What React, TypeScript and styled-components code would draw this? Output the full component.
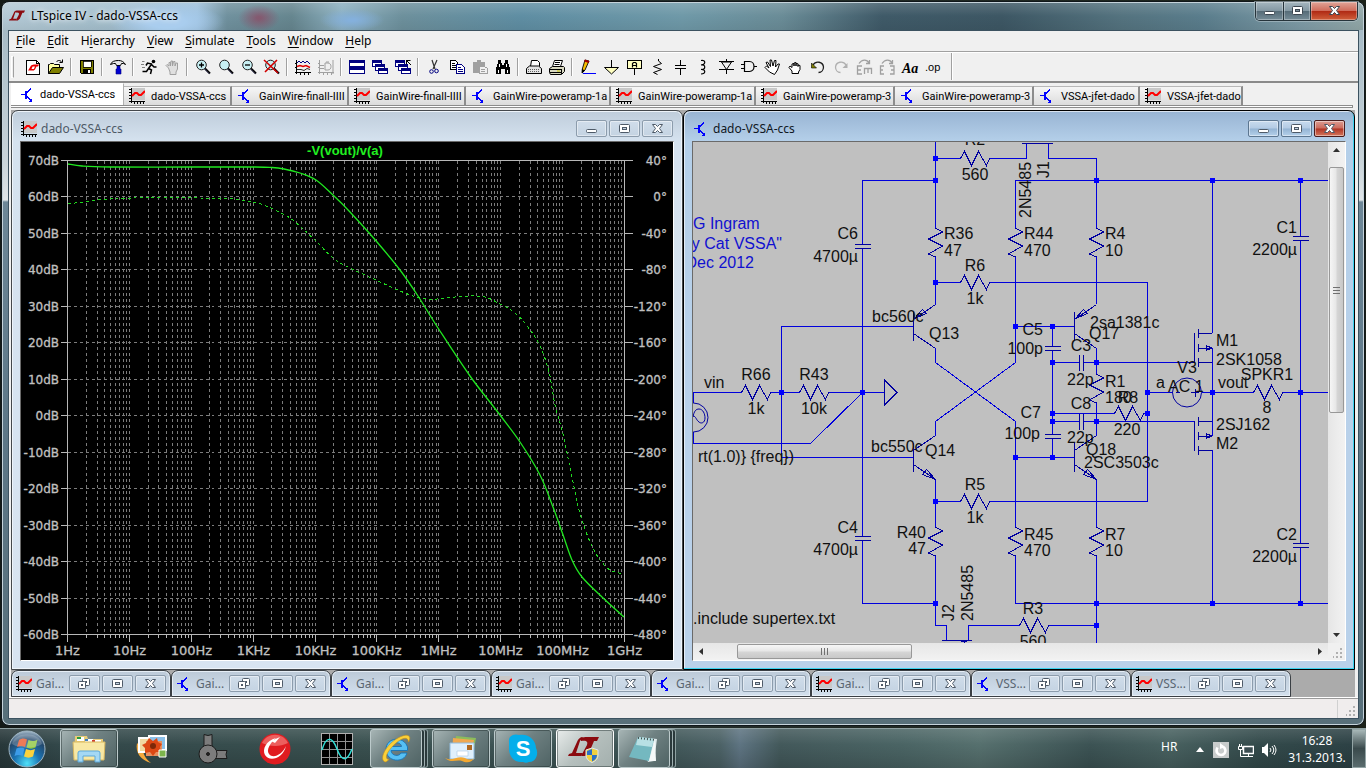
import React from "react";
import styled, { createGlobalStyle, css } from "styled-components";

const ui = `"Noto Sans", "Open Sans", sans-serif`;
const arial = `"Liberation Sans", Arial, sans-serif`;

const GlobalStyle = createGlobalStyle`
  * { box-sizing: border-box; }
  body { margin: 0; background: #1d2622; font-family: ${ui}; font-size: 12px; color: #000; }
  button { font: inherit; color: inherit; border: 0; background: none; padding: 0; margin: 0; }
  svg { display: block; flex: none; }
`;

/* ---------- shell ---------- */

const Desktop = styled.div`
  min-height: 100vh;
  display: flex;
  flex-direction: column;
  padding-top: 1px;
  background: linear-gradient(90deg, #141a17, #232d2a 50%, #1b2119);
`;

const AppWindow = styled.main`
  flex: 1;
  display: flex;
  flex-direction: column;
  margin: 0 1px 2px 1px;
  padding: 0 5px 6px 6px;
  border: 1px solid #10171b;
  border-radius: 8px;
  box-shadow: inset 0 0 0 1px #c5d3da;
  background:
    radial-gradient(ellipse 22px 14px at 257px 16px, #8c4a64c0 10%, transparent 95%) 0 0 / 100% 28px no-repeat,
    radial-gradient(ellipse 34px 12px at 350px 18px, #84b0dc 10%, transparent 95%) 0 0 / 100% 28px no-repeat,
    radial-gradient(ellipse 60px 20px at 165px 20px, #a9cdee 30%, transparent 95%) 0 0 / 100% 28px no-repeat,
    linear-gradient(#ffffff28, transparent 14px, #00000010) 0 0 / 100% 28px no-repeat,
    linear-gradient(90deg, #b4cad6 0, #a5c0ce 100px, #9dc0dc 195px, #70919e 225px, #66868f 290px, #8cb0c0 340px, #6d909c 400px, #5f8ea3 520px, #6f99a8 680px, #6a8c97 780px, #3f5a68 880px, #3d5764 1000px, #54737f 1120px, #5a7d8c 1200px, #7e9ba6 1300px, #93a8a8 100%) 0 0 / 100% 28px no-repeat,
    linear-gradient(180deg, #9fb6c2, #c9d4d9 160px, #dfe5e8 198px, #6d8797 200px, #5d7787 60%, #58707a);
`;

const TitleBar = styled.header`
  height: 28px;
  display: flex;
  align-items: flex-start;
  padding-right: 1px;
`;

const AppTitle = styled.h1`
  flex: 1;
  display: flex;
  align-items: center;
  gap: 6px;
  margin: 0;
  padding: 0 0 0 1px;
  height: 27px;
  font-size: 12px;
  font-weight: 400;
  text-shadow: 0 0 5px #fff, 0 0 8px #ffffffb0;
`;

const CaptionGroup = styled.div`
  display: flex;
  height: 19px;
  border: 1px solid #26343b;
  border-top: 0;
  border-radius: 0 0 5px 5px;
  overflow: hidden;
  box-shadow: 0 0 0 1px #b4c4cb90;
`;

const AppCaption = styled.button<{ $close?: boolean }>`
  width: ${(p) => (p.$close ? 47 : 27)}px;
  display: grid;
  place-items: center;
  background: ${(p) =>
    p.$close
      ? "linear-gradient(#e0a498 0, #cf6d5c 48%, #b02a14 52%, #d0603c)"
      : "linear-gradient(#a5b6bf 0, #8498a3 48%, #566c78 52%, #768c97)"};
  box-shadow: inset 0 0 0 1px #ffffff50;
  & + & { border-left: 1px solid #26343b; }
`;

const Client = styled.div`
  flex: 1;
  display: flex;
  flex-direction: column;
  border: 1px solid #3c5260;
  background: #f0f0f0;
`;

const MenuBar = styled.nav`
  display: flex;
  height: 21px;
  align-items: center;
  padding-left: 1px;
  border-bottom: 1px solid #a0a0a0;
`;

const MenuItem = styled.button`
  padding: 0 6px;
  line-height: 18px;
  u { text-underline-offset: 2px; }
`;

const ToolBar = styled.div`
  display: flex;
  align-items: center;
  height: 31px;
  padding: 0 0 1px 2px;
  border-top: 1px solid #fff;
  border-bottom: 2px solid #8a8a8a;
`;

const Grip = styled.span`
  width: 3px;
  height: 22px;
  margin-right: 7px;
  border: 1px solid #fff;
  border-right-color: #a0a0a0;
`;

const Tool = styled.button<{ $off?: boolean }>`
  width: 23px;
  height: 22px;
  padding-left: 4px;
  display: flex;
  align-items: center;
  color: ${(p) => (p.$off ? "#a0a0a0" : "#000")};
`;

const Divider = styled.span`
  width: 8px;
  height: 18px;
  background: linear-gradient(90deg, transparent 3px, #a0a0a0 3px, #a0a0a0 4px, #fff 4px, #fff 5px, transparent 5px);
`;

const ToolEnd = styled.span`
  width: 8px;
  align-self: stretch;
  border-right: 1px solid #a0a0a0;
  box-shadow: 1px 0 0 #fff;
`;

const TabStrip = styled.div`
  display: flex;
  align-items: flex-end;
  height: 22px;
  padding-left: 2px;
`;

const Tab = styled.button<{ $w: number; $active?: boolean }>`
  flex: 0 1 ${(p) => p.$w}px;
  width: ${(p) => p.$w}px;
  height: ${(p) => (p.$active ? 22 : 19)}px;
  display: flex;
  align-items: center;
  gap: ${(p) => (p.$active ? 4 : 6)}px;
  padding: 0 0 0 ${(p) => (p.$active ? 9 : 5)}px;
  overflow: hidden;
  white-space: nowrap;
  font-family: Roboto, ${arial};
  font-size: 11px;
  border-right: 2px solid #8c8c8c;
  border-top: 1px solid #b8b8b8;
  background: ${(p) => (p.$active ? "#fff" : "linear-gradient(#f6f6f6, #dcdcdc)")};
  ${(p) => p.$active && css`border-color: #fff #b0b0b0 #fff #fff; border-right-width: 1px;`}
`;

const TabRule = styled.div`
  height: 3px;
  margin: 0 5px 2px 2px;
  border: 1px solid #8c8c8c;
  border-left: 0;
  background: #fff;
`;

const Mdi = styled.section`
  flex: 1;
  display: flex;
  flex-direction: column;
  margin: 0 3px 0 2px;
  background: #ababab;
`;

const Tiles = styled.div`
  flex: 1;
  display: flex;
`;

const frame = css`
  border: 1px solid #3a3f44;
  border-radius: 7px 7px 0 0;
`;

const Child = styled.article<{ $active?: boolean }>`
  ${frame}
  flex: 1 1 0;
  min-width: 0;
  display: flex;
  flex-direction: column;
  padding: 0 8px 8px;
  background: ${(p) =>
    p.$active
      ? "linear-gradient(#98b4d3, #b4cfe9 30px, #b9d1ea 60%, #b9d1ea)"
      : "linear-gradient(#bfcddb, #d5e2ef 30px, #d8e4f1)"};
  border-color: ${(p) => (p.$active ? "#000" : "#44484c")};
  box-shadow: ${(p) => (p.$active ? "inset -1px -1px 0 #3bd3f0, inset 1px 1px 0 #ffffffa0" : "inset 0 0 0 1px #eef4fa")};
`;

const ChildBar = styled.header<{ $active?: boolean }>`
  height: 30px;
  display: flex;
  gap: 2px;
  padding: 9px 1px 0 0;
  color: ${(p) => (p.$active ? "#10181f" : "#4e5a66")};
`;

const ChildTitle = styled.h2`
  flex: 1;
  display: flex;
  gap: 4px;
  align-items: center;
  margin: 0;
  padding-left: 1px;
  height: 17px;
  font-size: 12px;
  font-weight: 400;
`;

const Caption = styled.button<{ $tone?: "close" | "active" }>`
  width: 31px;
  height: 17px;
  display: grid;
  place-items: center;
  border: 1px solid #8c9cac;
  border-radius: 2px;
  background: ${(p) =>
    p.$tone === "close"
      ? "linear-gradient(#dc9c92 0, #cc6a5c 48%, #b03424 52%, #d4765c)"
      : p.$tone === "active"
        ? "linear-gradient(#c8dbee 0, #b3cbe4 48%, #94b4d4 52%, #b4d0ea)"
        : "linear-gradient(#d0ddea, #c4d3e2)"};
  border-color: ${(p) => (p.$tone === "close" ? "#4a1c1c" : p.$tone ? "#5c7690" : "#8c9cac")};
  box-shadow: inset 0 0 0 1px #ffffff70;
`;

const ChildBody = styled.div<{ $plot?: boolean }>`
  flex: 1;
  display: grid;
  grid-template: ${(p) => (p.$plot ? "minmax(0, 1fr) / minmax(0, 1fr)" : "minmax(0, 1fr) 17px / minmax(0, 1fr) 17px")};
  min-height: 520px;
  border: 1px solid #fff;
  border-top-color: #6a6a6a;
  border-left-color: #6a6a6a;
  background: ${(p) => (p.$plot ? "#000" : "#f0f0f0")};
  svg.canvas { width: 100%; height: 100%; }
`;

const VScroll = styled.div`
  display: flex;
  flex-direction: column;
  align-items: center;
  background: linear-gradient(90deg, #e6e6e6, #f2f2f2);
`;

const HScroll = styled.div`
  display: flex;
  align-items: center;
  background: linear-gradient(#e6e6e6, #f2f2f2);
`;

const Arrow = styled.button`
  width: 17px;
  height: 17px;
  display: grid;
  place-items: center;
`;

const VThumb = styled.div`
  width: 15px;
  height: 246px;
  margin-top: 8px;
  display: grid;
  place-items: center;
  border: 1px solid #989898;
  border-radius: 2px;
  background: linear-gradient(90deg, #f6f6f6, #e6e6e6 48%, #d6d6d6 52%, #c8c8c8);
`;

const HThumb = styled.div`
  width: 175px;
  height: 15px;
  margin-left: 27px;
  display: grid;
  place-items: center;
  border: 1px solid #989898;
  border-radius: 2px;
  background: linear-gradient(#f6f6f6, #e6e6e6 48%, #d6d6d6 52%, #c8c8c8);
`;

const Fill = styled.span`flex: 1;`;

const GripCell = styled.div`
  display: grid;
  place-items: end;
  padding: 2px;
`;

const MinRow = styled.div`
  display: flex;
  height: 27px;
`;

const MinChild = styled.div`
  ${frame}
  width: 160px;
  display: flex;
  align-items: center;
  gap: 2px;
  padding: 0 4px;
  color: #5a6672;
  background: linear-gradient(#bccad8, #d3e0ed);
  box-shadow: inset 0 0 0 1px #e6eef6;
  span { flex: 1; padding-left: 2px; }
`;

const StatusBar = styled.footer`
  height: 21px;
  display: flex;
  justify-content: flex-end;
  align-items: stretch;
  border-top: 1px solid #fff;
  box-shadow: inset 0 1px 0 #9a9a9a;
  background: #f0eded;
`;

const StatusGrip = styled.div`
  width: 21px;
  margin-top: 2px;
  padding: 2px;
  display: grid;
  place-items: end;
  border-left: 1px solid #d0d0d0;
`;

/* ---------- taskbar ---------- */

const TaskBar = styled.footer`
  height: 40px;
  display: flex;
  align-items: stretch;
  border-top: 1px solid #8ea0a2;
  color: #fff;
  background:
    linear-gradient(#ffffff20, transparent 40%, #00000028),
    linear-gradient(90deg, #28383a 0, #33484a 60px, #39504f 340px, #3f5657 660px, #4c6266 720px, #5e7482 740px, #43595b 780px, #4a6464 900px, #56706e 980px, #3c5354 1090px, #486160 1170px, #334a4b 1260px, #2c4044 100%);
`;

const StartButton = styled.button`
  width: 60px;
  padding-left: 8px;
  display: flex;
  align-items: center;
`;

const Task = styled.button<{ $state?: "open" | "stack" | "front" }>`
  width: 58px;
  margin-right: 4px;
  display: flex;
  align-items: center;
  justify-content: center;
  ${(p) =>
    p.$state &&
    css`
      border: 1px solid #bccacb;
      border-radius: 3px;
      box-shadow: inset 0 0 0 1px #1c282a70;
      background: linear-gradient(135deg, #a7b5b5 0, #6f8182 45%, #4f6364);
    `}
  ${(p) => p.$state === "front" && css`background: linear-gradient(135deg, #e8eceb 0, #b5bfbd 50%, #a3afad); border-color: #fff;`}
  ${(p) =>
    p.$state === "stack" &&
    css`
      width: 52px;
      margin-right: 10px;
      box-shadow: 3px 0 0 -1px #2a393b, 3px 0 0 0 #9fb0b1, 6px 0 0 -1px #2a393b, 6px 0 0 0 #8da0a1;
    `}
`;

const Tray = styled.div`
  margin-left: auto;
  display: flex;
  align-items: center;
`;

const Lang = styled.button`
  width: 35px;
  padding-bottom: 4px;
  text-align: left;
`;

const TrayIcon = styled.button<{ $w: number }>`
  width: ${(p) => p.$w}px;
  padding-top: 2px;
`;

const Clock = styled.time`
  width: 70px;
  text-align: center;
  line-height: 17px;
`;

const ShowDesktop = styled.button`
  align-self: stretch;
  width: 14px;
  border: 1px solid #94a5a6;
  background: linear-gradient(#a8b8b8, #3a4a4c 50%, #5a6c6e);
`;

/* ---------- small glyphs ---------- */

const TransistorIcon = () => (
  <svg width="16" height="16" shapeRendering="crispEdges" fill="none" stroke="#0000ff">
    <path d="M1 7.500h4M7 5.500l4-4M7 9.500l4 4" />
    <path d="M6 4v8" strokeWidth="2" />
    <path d="M12 15H8l4-4z" fill="#0000ff" stroke="none" />
  </svg>
);

const WaveIcon = () => (
  <svg width="16" height="16" shapeRendering="crispEdges">
    <path d="M2 0h14v12H2z" fill="#c8c8c8" />
    <path d="M2.500 0v15M0 13.500h16M0 1.500h2M0 4.500h2M0 7.500h2M0 10.500h2M5.500 13v3M8.500 13v3M11.500 13v3M14.500 13v3" stroke="#000" fill="none" />
    <path d="M3 8l3-3h2l2 2h2l4-4" stroke="#f00" strokeWidth="2" fill="none" shapeRendering="auto" />
  </svg>
);

const markL = "M0 19l1-2 3-1L9 5C10 2 12 0 15 0l-3 4-4 12h7l-2 3z";
const markT = "M13 1c2-1 4-1 6-1h12l-2 4h-3l-5 12-4 3h-4l6-11c1-3 0-5-6-4z";

const LogoMark = () => (
  <svg width="16" height="11" viewBox="0 0 31 19" fill="#8b0a0f">
    <path d={markL} />
    <path d={markT} />
  </svg>
);

const CapIcon = ({ kind, dark }: { kind: "min" | "max" | "close" | "restore"; dark?: boolean }) => {
  const s = dark ? "#3c4650" : "#4e5a68";
  return (
    <svg width="15" height="12" viewBox="0 0 15 12">
      {kind === "min" && <rect x="2.500" y="6.500" width="10" height="3" rx="1" fill="#fff" stroke={s} />}
      {kind === "max" && (
        <g stroke={s} fill="#fff">
          <rect x="2.500" y="1.500" width="10" height="8" rx="1" />
          <rect x="5.500" y="4.500" width="4" height="2" fill={dark ? "#7c8e99" : "#c4d3e2"} />
        </g>
      )}
      {kind === "restore" && (
        <g stroke={s} fill="#fff">
          <rect x="5.500" y="0.500" width="7" height="7" rx="1" />
          <rect x="8" y="3" width="2" height="2" stroke="none" fill={s} />
          <rect x="1.500" y="3.500" width="7" height="7" rx="1" />
          <rect x="4.500" y="6.500" width="1" height="1" />
        </g>
      )}
      {kind === "close" && (
        <path d="M2.500 1.500h3l2 2 2-2h3L9.500 5.500l3 4h-3l-2-2-2 2h-3l3-4z" fill="#fff" stroke={s} strokeLinejoin="round" />
      )}
    </svg>
  );
};

const GripDots = () => (
  <svg width="10" height="10" fill="#b0b0b0" shapeRendering="crispEdges">
    <path d="M7 0h2v2H7zM7 4h2v2H7zM3 4h2v2H3zM7 8h2v2H7zM3 8h2v2H3zM0 8h1v2H0z" />
  </svg>
);

/* ---------- toolbar icons ---------- */

const Lens = ({ children }: { children?: React.ReactNode }) => (
  <>
    <circle cx="6.500" cy="6" r="4.800" fill="#c8f0f4" stroke="#202020" />
    <path d="M10 9.500l5 5" stroke="#000" strokeWidth="2" />
    <path d="M9.500 10l5 5" stroke="#404060" />
    {children}
  </>
);

const cascade = (
  <g fill="#fff" stroke="#000080" shapeRendering="crispEdges">
    <rect x="0.500" y="1.500" width="9" height="6" />
    <path d="M0 2.500h10" strokeWidth="2" />
    <rect x="3.500" y="5.500" width="9" height="6" />
    <path d="M3 6.500h10" strokeWidth="2" />
    <rect x="6.500" y="9.500" width="9" height="5" />
    <path d="M6 10.500h10" strokeWidth="2" />
  </g>
);

const hand = "M4.500 9L2 6.500l1-1L5 7V3.500h1.500V7L7 2h1.500v5L9.500 2.500H11V7l1-3h1.500v6L12 13v2.500H6V13z";

type ToolDef = { id: string; off?: boolean; art: React.ReactNode } | "|";

const tools: ToolDef[] = [
  {
    id: "New schematic",
    art: (
      <>
        <path d="M1.500 1.500h10l3 3v11h-13z" fill="#fff" stroke="#000" shapeRendering="crispEdges" />
        <path d="M11.500 1.500v3h3" fill="none" stroke="#000" shapeRendering="crispEdges" />
        <path d="M3 11.500l1-1.500 2-3.500 2.500-1L6.500 10H9l-1 1.500zM8 6l1-.5h5l-1 2h-1.500L10 10.500l-2 1.500 2-4.500H7.500z" fill="#e80000" />
      </>
    ),
  },
  {
    id: "Open",
    art: (
      <>
        <path d="M.500 14.500V5.500h1l1-1h3l1 1h5v3" fill="#ffffa0" stroke="#000" />
        <path d="M.500 14.500l4-6h11l-4 6z" fill="#808000" stroke="#000" />
        <path d="M8.500 3c1-2 4-2 5 0M11.500 3.500h3v-3" fill="none" stroke="#000" />
      </>
    ),
  },
  "|",
  {
    id: "Save",
    art: (
      <g shapeRendering="crispEdges">
        <path d="M1.500 1.500h13v13h-12l-1-1z" fill="#808000" stroke="#000" />
        <path d="M4 2h8v6H4z" fill="#fff" stroke="#000" strokeWidth="0.800" />
        <path d="M4 10h8v5H4z" fill="#000" />
        <path d="M9 11h2v3H9z" fill="#fff" />
      </g>
    ),
  },
  "|",
  {
    id: "Control panel",
    art: (
      <>
        <path d="M.500 5.500c1-3 4-4 8-4 3 0 5 1 7 4l-2-1h-2l-1 2h-4l-1-2h-2z" fill="#e8e8e8" stroke="#000" />
        <path d="M7 7h3v3h1v5H6v-5h1z" fill="#0000d0" stroke="#000080" strokeWidth="0.600" />
      </>
    ),
  },
  "|",
  {
    id: "Run",
    art: (
      <>
        <circle cx="12.500" cy="2.500" r="1.800" fill="#000" />
        <path d="M11 4.500L7.500 9.500M10.500 5L6.500 4 5 6.500M11 6l2 2h2.500M7.500 9.500l3 1.500-1 4M7.500 9.500L5.500 12.500H1.500" fill="none" stroke="#000" strokeWidth="1.500" />
        <path d="M1 2.500h2.500M0 5.500h3M1 8.500h3" stroke="#808080" />
      </>
    ),
  },
  { id: "Halt", off: true, art: <path d={hand} fill="#e0e0e0" stroke="#a0a0a0" /> },
  "|",
  { id: "Zoom in", art: <Lens><path d="M4 6h5M6.500 3.500v5" stroke="#000" strokeWidth="1.300" /></Lens> },
  { id: "Pan", art: <Lens /> },
  { id: "Zoom back", art: <Lens><path d="M4 6h5" stroke="#000" strokeWidth="1.300" /></Lens> },
  { id: "Zoom full extents", art: <Lens><path d="M0 1l14 13M13 1L1 13" stroke="#d00000" strokeWidth="1.600" /></Lens> },
  "|",
  {
    id: "Autorange",
    art: (
      <>
        <path d="M1.500 1v14M0 13.500h16M0 4.500h2M0 8.500h2M5.500 13v3M9.500 13v3M13.500 13v3" stroke="#000" fill="none" shapeRendering="crispEdges" />
        <path d="M2 4l2-2 2 2 2-2 2 2 2-2 3 3" fill="none" stroke="#000080" />
        <path d="M2 7.500l3-1 3 1 3-1 4 2" fill="none" stroke="#e00000" strokeWidth="1.500" />
        <path d="M2 10.500h4l3 1 3-2 3 1" fill="none" stroke="#303030" />
      </>
    ),
  },
  {
    id: "Pick visible traces",
    off: true,
    art: (
      <g fill="none" stroke="#a0a0a0">
        <path d="M1.500 1v14M0 13.500h16M0 4.500h2M0 8.500h2M5.500 13v3M9.500 13v3M13.500 13v3M2 6.500h4M2 9.500h4M8 3h3M15 1v14" />
        <path d="M7 4v7h3c4 0 4-7 0-7z" />
      </g>
    ),
  },
  "|",
  {
    id: "Tile",
    art: (
      <g fill="#fff" stroke="#000080" shapeRendering="crispEdges">
        <rect x="0.500" y="1.500" width="15" height="6" />
        <path d="M0 2.500h16" strokeWidth="2" />
        <rect x="0.500" y="8.500" width="15" height="6" />
        <path d="M0 9.500h16" strokeWidth="2" />
      </g>
    ),
  },
  { id: "Cascade", art: cascade },
  {
    id: "Close all",
    art: (
      <>
        {cascade}
        <path d="M11.500 1.500h4M11.500 1v4M12 2l4 4" stroke="#000" fill="none" />
      </>
    ),
  },
  "|",
  {
    id: "Cut",
    art: (
      <>
        <path d="M6 1l3 9M11 1L7 10" stroke="#303030" strokeWidth="1.200" />
        <circle cx="5.500" cy="12.500" r="1.800" fill="none" stroke="#000080" />
        <circle cx="10.500" cy="12" r="1.800" fill="none" stroke="#000080" />
      </>
    ),
  },
  {
    id: "Copy",
    art: (
      <g fill="#fff" stroke="#000" shapeRendering="crispEdges">
        <path d="M1.500 1.500h5l2 2v7h-7zM3 4.500h3M3 6.500h4M3 8.500h4" />
        <path d="M7.500 5.500h5l3 3v6h-8zM9 8.500h3M9 10.500h5M9 12.500h5" stroke="#000080" />
      </g>
    ),
  },
  {
    id: "Paste",
    off: true,
    art: (
      <g shapeRendering="crispEdges">
        <path d="M1 3h4V1h4v2h4v11H1z" fill="#a0a0a0" />
        <path d="M7.500 7.500h5l3 2v5h-8z" fill="#f0f0f0" stroke="#a0a0a0" />
        <path d="M9 10.500h4M9 12.500h4" stroke="#a0a0a0" />
      </g>
    ),
  },
  {
    id: "Find",
    art: (
      <g shapeRendering="crispEdges">
        <path d="M3 1h3v3h1v2h2V4h1V1h3v3l2 5v6h-5v-5H6v5H1V9l2-5z" fill="#000" />
        <path d="M4 5v3M11 5v3M3 11v3M12 11v3" stroke="#fff" strokeWidth="1" />
      </g>
    ),
  },
  "|",
  {
    id: "Print setup",
    art: (
      <>
        <path d="M4.500 7.500l1-6h6l2 2v4" fill="#fff" stroke="#000" />
        <path d="M.500 14.500v-5l3-2.500h9l3 2.500v5z" fill="#e4e4e4" stroke="#000" />
        <path d="M2 10.500h12M2 12.500h12" stroke="#606060" strokeDasharray="1 1" />
      </>
    ),
  },
  {
    id: "Print",
    art: (
      <>
        <path d="M3.500 7.500l2-6h8l-2 6" fill="#fff" stroke="#000" />
        <path d="M6 3.500h5M5.500 5.500h5" stroke="#000" />
        <path d="M.500 9.500l3-2h11l1 1v4l-3 3H1.500l-1-2z" fill="#d8d8c0" stroke="#000" />
        <path d="M1 10.500h11M1 13.500h11M12.500 10v5" stroke="#000" />
        <path d="M8 12h3" stroke="#c0c000" />
      </>
    ),
  },
  "|",
  {
    id: "Draw wire",
    art: (
      <>
        <path d="M5 1l4 1-4 9-3 3 .3-4z" fill="#f8c000" stroke="#000" strokeWidth="0.900" />
        <path d="M4.500 1.500L9 3" stroke="#a00000" strokeWidth="2" />
        <path d="M2 10v4.500l3-3z" fill="#000" />
        <path d="M3 14.500h13" stroke="#0000ff" shapeRendering="crispEdges" />
      </>
    ),
  },
  {
    id: "Ground",
    art: (
      <>
        <path d="M8.500 1v7" stroke="#000" />
        <path d="M1.500 8.500h14l-7 6.500z" fill="#ffffc0" stroke="#000" />
      </>
    ),
  },
  {
    id: "Label net",
    art: (
      <>
        <path d="M1.500 1.500h14v8h-14z" fill="#ffffc0" stroke="#000" shapeRendering="crispEdges" />
        <path d="M8.500 10v6" stroke="#000" shapeRendering="crispEdges" />
        <path d="M6.500 8.500v-4l1-1h2l1 1v4M6.500 6.500h4" fill="none" stroke="#000" strokeWidth="1.200" />
      </>
    ),
  },
  { id: "Resistor", art: <path d="M9.500 0v2l3 2.500-8 3 8 3-8 3 4 2" fill="none" stroke="#000" /> },
  { id: "Capacitor", art: <path d="M8.500 1v6M3 6.500h11M3 9.500h11M8.500 10v6" fill="none" stroke="#000" shapeRendering="crispEdges" /> },
  { id: "Inductor", art: <path d="M6 1.500c5-1 5 4 0 4.500 5-1 5 4.500 0 4.500 5-.5 5 4.500 0 4.500" fill="none" stroke="#000" strokeWidth="1.200" /> },
  {
    id: "Diode",
    art: <path d="M1 2.500h15M8.500 0v3M3.500 3l5 7.500 5-7.500zM1 10.500h15M8.500 10v5" fill="none" stroke="#000" />,
  },
  {
    id: "Component",
    art: <path d="M3.500 2.500h5c6 0 6 10 0 10h-5zM0 5.500h3M0 9.500h3M13 7.500h3" fill="none" stroke="#000" strokeWidth="1.200" />,
  },
  {
    id: "Move",
    art: <path d="M5.500 13L1 8.500 2.500 7l2.500 2L2 3.500 3.500 3l3 4.500L6 1h1.500l1.500 6L10.500 1.500H12L11.500 8 14 5h1.500L13.500 11l-3 4.500z" fill="#fff" stroke="#000" />,
  },
  {
    id: "Drag",
    art: <path d="M5 14.500V12L2 8.500 3 7l2 1.500V5L7 4.500V7 4l2-.5V7 4.500l2 .3V7.500 6l2 .5v4L11.500 13v1.500z" fill="#fff" stroke="#000" />,
  },
  {
    id: "Undo",
    art: (
      <>
        <path d="M3 6c3-5 10-3 10.500 2 0 3-2 5.500-5 5.500" fill="none" stroke="#202020" strokeWidth="1.300" />
        <path d="M1.500 4v5h5z" fill="#808000" stroke="#000" strokeWidth="0.600" />
      </>
    ),
  },
  {
    id: "Redo",
    off: true,
    art: (
      <>
        <path d="M13 6C10 1 3 3 2.500 8c0 3 2 5.500 5 5.500" fill="none" stroke="#b0b0b0" strokeWidth="1.300" />
        <path d="M14.500 4v5h-5z" fill="#b0b0b0" />
      </>
    ),
  },
  {
    id: "Rotate",
    off: true,
    art: (
      <g fill="none" stroke="#a0a0a0" strokeWidth="1.300">
        <path d="M6 7H1.500v8H6M1.500 11H5M8.500 15V9.500h7V15M12 9.500V14M3 4.500C6 0 11 0 13 4M13.500 1v3.500H10" />
      </g>
    ),
  },
  {
    id: "Mirror",
    off: true,
    art: (
      <g fill="none" stroke="#a0a0a0" strokeWidth="1.300">
        <path d="M5 7H1.500v8H5M1.500 11H4M11 7h4v8h-4M15 11h-3M3 4.500C6 0 11 0 13 4M13.500 1v3.500H10" />
      </g>
    ),
  },
  {
    id: "Text",
    art: (
      <text x="0" y="14" fontFamily='"Liberation Serif", serif' fontStyle="italic" fontWeight="700" fontSize="14">
        Aa
      </text>
    ),
  },
  {
    id: "SPICE directive",
    art: (
      <text x="0" y="12" fontFamily={arial} fontSize="11">
        .op
      </text>
    ),
  },
];

/* ---------- bode plot ---------- */

type Pt = [number, number];

const smooth = (p: Pt[]) =>
  p.slice(1).reduce((d, cur, i) => {
    const prev = p[i];
    const before = p[i - 1] ?? prev;
    const after = p[i + 2] ?? cur;
    const c1 = [prev[0] + (cur[0] - before[0]) / 6, prev[1] + (cur[1] - before[1]) / 6];
    const c2 = [cur[0] - (after[0] - prev[0]) / 6, cur[1] - (after[1] - prev[1]) / 6];
    return `${d}C${c1.map((n) => n.toFixed(1))} ${c2.map((n) => n.toFixed(1))} ${cur}`;
  }, `M${p[0]}`);

const gain: Pt[] = [
  [68, 164], [82, 166], [110, 167], [190, 167], [255, 167], [272, 167.500], [284, 169], [300, 173], [316, 180], [333, 195],
  [350, 212], [377, 242], [400, 270], [418, 296], [438, 328], [470, 376], [500, 415], [520, 442], [540, 475], [553, 507],
  [562, 532], [572, 560], [582, 577], [602, 597], [624, 617],
];

const phase: Pt[] = [
  [68, 204], [83, 202], [107, 199], [133, 198], [200, 198], [233, 199], [257, 203], [273, 209], [290, 218], [303, 229],
  [317, 242], [333, 258], [350, 268], [376, 280], [400, 291], [420, 298], [437, 299], [455, 297], [470, 296], [485, 297],
  [500, 304], [515, 313], [528, 327], [540, 346], [549, 372], [555, 405], [562, 430], [568, 458], [573, 482], [579, 510],
  [588, 537], [598, 557], [610, 570], [624, 574],
];

const L = 67.5, R = 624.5, T = 160.5, B = 634.5;
const decade = (R - L) / 9;
const rowY = (i: number) => Math.round(160 + (i * 474) / 13) + 0.5;
const colX = (d: number, k: number) => Math.round(67 + decade * (d + Math.log10(k))) + 0.5;
const freqs = ["1Hz", "10Hz", "100Hz", "1KHz", "10KHz", "100KHz", "1MHz", "10MHz", "100MHz", "1GHz"];

const BodePlot = () => {
  let grid = "";
  let ticks = "";
  for (let i = 1; i < 13; i++) grid += `M${L} ${rowY(i)}H${R}`;
  for (let i = 0; i < 14; i++) ticks += `M61 ${rowY(i)}H${L}M${R} ${rowY(i)}H633`;
  for (let d = 0; d < 9; d++)
    for (let k = 1; k < 10; k++) {
      if (d || k > 1) grid += `M${colX(d, k)} ${T}V${B}`;
      ticks += `M${colX(d, k)} ${B}V${k === 1 ? 642 : 638}`;
    }
  ticks += `M${R} ${B}V642`;
  return (
    <svg className="canvas" viewBox="21 142 652 518" fontFamily='"DejaVu Sans", sans-serif' fontSize="12" role="img" aria-label="Gain and phase of -V(vout)/v(a)">
      <g fill="none" shapeRendering="crispEdges">
        <path d={grid} stroke="#7c7c7c" strokeDasharray="3 3" />
        <path d={`M${L} ${T}H${R}V${B}H${L}Z${ticks}`} stroke="#b8b8b8" />
        <path d={smooth(phase)} stroke="#20d820" strokeDasharray="3 3" />
      </g>
      <path d={smooth(gain)} stroke="#20e820" strokeWidth="1.300" fill="none" />
      <g fill="#c0c0c0" stroke="#c0c0c0" strokeWidth="0.300">
        {Array.from({ length: 14 }, (_, i) => (
          <React.Fragment key={i}>
            <text x="59" y={rowY(i) + 4} textAnchor="end">{`${70 - i * 10}dB`}</text>
            <text x="667" y={rowY(i) + 4} textAnchor="end">{`${40 - i * 40}°`}</text>
          </React.Fragment>
        ))}
        <g fontSize="13">
          {freqs.map((f, d) => (
            <text key={f} x={colX(d, 1)} y="655" textAnchor="middle">{f}</text>
          ))}
        </g>
      </g>
      <text x="345" y="155" textAnchor="middle" fill="#20f020" fontFamily={arial} fontWeight="700" fontSize="13">
        -V(vout)/v(a)
      </text>
    </svg>
  );
};

/* ---------- schematic ---------- */

const resV = (x: number, y: number) => `M${x} ${y}l7 4-14 7 14 7-14 8 7 3`;
const resH = (x: number, y: number) => `M${x} ${y}l4-7 7 14 7-14 8 14 3-7`;
const capV = (x: number, y: number) => `M${x - 8} ${y}h16M${x - 8} ${y + 4}h16`;
const capH = (x: number, y: number) => `M${x} ${y - 8}v16M${x + 4} ${y - 8}v16`;
const pnp = (x: number) => `M${x} 312V341M${x} 333.500l22 15M${x} 319.500l22-15M${x + 1} 318.500l8-9 4 4z`;
const npn = (x: number) => `M${x} 443V472M${x} 450.500l22-15M${x} 464.500l22 15M${x + 22} 479.500l-9-10-4 5z`;

const wires = `
M935.5 142V228M935.5 257V304.5M935.500 158.500H961M990 158.500H1026.500V143M1048.500 143V158.500H1096.500V228
M935.500 180.500H862.500V244M862.500 248V537M862.500 541V603.500H935.500
M935.500 282.500H961M990 282.500H1147.500V501.500H990M935.500 501.500H961
M781.500 326.500H913M781.500 326V457.500H913
M935.500 348V362.500L1015.500 421.500V527M935.500 436V421.500L1015.500 362.500V257M1015.500 228V180.500H1328
M935.500 479V527M935.500 556V625.500H946.500V640M968.500 640V625.500H1020M1049 625.500H1096.500
M693 392.500H742M771 392.500H800M829 392.500H884.500M693.500 392V403M693.500 432V443.500H810.500L862.500 392.500
M1015.500 326.500H1074M1052.500 326V346M1052.500 350V434M1052.500 438V457M1015.500 457.500H1074
M1052.500 362.500H1079M1084 362.500H1194M1052.500 421.500H1079M1084 421.500H1194
M1052.500 413.500H1115M1144 413.500H1147M1096.500 348V374M1096.500 403V436M1096.500 257V304M1096.500 479V527M1096.500 556V643
M1015.500 556V603.500H1328M1147 392.500H1173M1202 392.500H1254M1283 392.500H1328
M1212.500 180V333M1212.500 348V436M1212.500 450V603M1300.500 180V237M1300.500 241V544M1300.500 548V603`;

const symbols = [
  resV(935.5, 228), resV(1015.5, 228), resV(1096.5, 228), resV(1096.5, 374), resV(935.5, 527), resV(1015.5, 527), resV(1096.5, 527),
  resH(960.5, 158.5), resH(960.5, 282.5), resH(960.5, 501.5), resH(741.5, 392.5), resH(799.5, 392.5), resH(1114.5, 413.5),
  resH(1253.5, 392.5), resH(1019.5, 625.5),
  capV(862.5, 244.5), capV(862.5, 536.5), capV(1052.5, 346.5), capV(1052.5, 434.5), capV(1300.5, 236.5), capV(1300.5, 543.5),
  capH(1079.5, 362.5), capH(1079.5, 421.5),
  pnp(913.5), pnp(1074.5), npn(913.5), npn(1074.5),
  "M1022 143.500H1053M942 640.500H972M964 643v-1l-3-1h6l-3 1",
  "M884.500 380V405L897 392.500Z",
  "M1194.500 333V363M1198.500 329V338M1198.500 344V352M1198.500 358V367M1198 333.500h14M1198 348.500h14M1198 362.500h14M1212 348l-6-2.500v5z",
  "M1194.500 421V451M1198.500 417V426M1198.500 432V440M1198.500 446V455M1198 421.500h14M1198 436.500h14M1198 450.500h14M1212 436l-6-2.500v5z",
  "M1191 392.500h8M1195.500 389v8M1176 392.500h4",
].join("");

const joints: Pt[] = [
  [935, 158], [935, 180], [935, 282], [935, 501], [935, 603], [1096, 180], [1212, 180], [1300, 180], [1015, 326], [1052, 326],
  [1052, 362], [1096, 362], [781, 392], [862, 392], [1147, 392], [1212, 392], [1300, 392], [1052, 413], [1147, 413], [1052, 421],
  [1096, 421], [1015, 457], [1052, 457], [1096, 603], [1212, 603], [1300, 603], [1096, 625],
];

type Label = [string, number, number, ("start" | "middle" | "end")?];

const labels: Label[] = [
  ["R2", 975, 145, "middle"], ["560", 975, 180, "middle"],
  ["C6", 858, 239, "end"], ["4700µ", 858, 262, "end"],
  ["R36", 944, 239], ["47", 944, 256], ["R6", 975, 271, "middle"], ["1k", 975, 304, "middle"],
  ["R44", 1024, 239], ["470", 1024, 256], ["R4", 1105, 239], ["10", 1105, 256],
  ["C1", 1297, 233, "end"], ["2200µ", 1297, 255, "end"],
  ["bc560c", 872, 322], ["Q13", 929, 339], ["R66", 756, 380, "middle"], ["R43", 814, 380, "middle"],
  ["vin", 704, 388], ["1k", 756, 414, "middle"], ["10k", 814, 414, "middle"],
  ["C5", 1043, 335, "end"], ["100p", 1043, 354, "end"], ["2sa1381c", 1090, 328], ["Q17", 1089, 339],
  ["C3", 1081, 351, "middle"], ["22p", 1067, 385], ["R1", 1105, 387], ["180", 1105, 403], ["R8", 1128, 403, "middle"],
  ["220", 1127, 435, "middle"], ["C8", 1081, 409, "middle"], ["22p", 1067, 443], ["C7", 1041, 418, "end"], ["100p", 1040, 439, "end"],
  ["Q18", 1086, 455], ["2SC3503c", 1084, 468], ["a", 1156, 388], ["AC 1", 1168, 392], ["V3", 1187, 373, "middle"],
  ["M1", 1216, 346], ["2SK1058", 1216, 365], ["vout", 1218, 388], ["SPKR1", 1267, 380, "middle"], ["8", 1267, 413, "middle"],
  ["2SJ162", 1216, 430], ["M2", 1216, 449],
  ["bc550c", 871, 452], ["Q14", 925, 456], ["rt(1.0)} {freq})", 794, 462, "end"],
  ["R5", 975, 490, "middle"], ["1k", 975, 523, "middle"], ["C4", 858, 533, "end"], ["4700µ", 858, 555, "end"],
  ["R40", 926, 538, "end"], ["47", 926, 554, "end"], ["R45", 1024, 540], ["470", 1024, 556], ["R7", 1105, 540], ["10", 1105, 556],
  ["C2", 1297, 540, "end"], ["2200µ", 1297, 562, "end"], ["R3", 1033, 614, "middle"], ["560", 1033, 647, "middle"],
  [".include supertex.txt", 693, 624],
];

const rotated: Label[] = [["2N5485", 1031, 218], ["J1", 1049, 178], ["J2", 954, 621], ["2N5485", 973, 621]];

const Schematic = () => (
  <svg className="canvas" viewBox="693 142 635 501" preserveAspectRatio="xMinYMin slice" fontFamily={arial} fontSize="16" role="img" aria-label="Amplifier schematic">
    <rect x="693" y="142" width="1400" height="1400" fill="#c0c0c0" />
    <g fill="none" shapeRendering="crispEdges">
      <path d={wires} stroke="#0000dc" />
      <path d={symbols} stroke="#0000a0" />
    </g>
    <g fill="none" stroke="#0000a0">
      <circle cx="1187" cy="392.500" r="14.500" />
      <circle cx="693.500" cy="417.500" r="14.500" />
      <path d="M693 417c1-6 3-8 6-8 4 0 6 5 6 9 0 5-4 6-6 4-3-2-3-6-6-6" />
    </g>
    <g fill="#0000ff" shapeRendering="crispEdges">
      {joints.map(([x, y]) => (
        <rect key={`${x}-${y}`} x={x - 2} y={y - 2} width="5" height="5" />
      ))}
    </g>
    <g fill="#101010">
      {labels.map(([t, x, y, a], i) => (
        <text key={i} x={x} y={y} textAnchor={a ?? "start"}>{t}</text>
      ))}
      {rotated.map(([t, x, y]) => (
        <text key={`${t}${x}`} transform={`translate(${x} ${y}) rotate(-90)`}>{t}</text>
      ))}
    </g>
    <g fill="#1010d0">
      <text x="693" y="229">G Ingram</text>
      <text x="782" y="249" textAnchor="end">y Cat VSSA"</text>
      <text x="754" y="268" textAnchor="end">Dec 2012</text>
    </g>
  </svg>
);

/* ---------- taskbar art ---------- */

const StartOrb = () => (
  <svg width="38" height="38" viewBox="0 0 38 38">
    <defs>
      <radialGradient id="orb" cx="0.500" cy="0.900" r="0.900">
        <stop offset="0" stopColor="#4fe0f8" />
        <stop offset="0.400" stopColor="#1a74b4" />
        <stop offset="0.750" stopColor="#23486c" />
        <stop offset="1" stopColor="#a8bccb" />
      </radialGradient>
    </defs>
    <circle cx="19" cy="19" r="18" fill="url(#orb)" stroke="#9fb6c4" />
    <path d="M11 10c3-2 5-2 8-.5L17 17c-3-1.500-5-1.500-8 0z" fill="#e8562a" />
    <path d="M20.500 10c3 1.500 6 1.500 9-.5l-2 8c-3 1.500-6 1.500-9 0z" fill="#8cc63c" />
    <path d="M8.500 18.500c3-1.500 5-1.500 8 0L14.500 26c-3-1.500-5-1.500-8 0z" fill="#3c9ce8" />
    <path d="M18 19c3 1.500 6 1.500 9 0l-2 7.500c-3 1.500-6 1.500-9 0z" fill="#fbd23c" />
    <path d="M4 14C7 1 31 1 34 14c-8 5-22 5-30 0z" fill="#fff" opacity="0.220" />
  </svg>
);

const FolderArt = () => (
  <svg width="34" height="30" viewBox="0 0 34 30">
    <path d="M3 2h12l1 3h15v18H2z" fill="#e8cc78" />
    <path d="M5 3h7v4H5zM13 5h8v4h-8zM21 6h8v4h-8z" fill="#fff" />
    <path d="M5 3h4v2H5z" fill="#2c9c3c" />
    <path d="M20 6h3v2h-3z" fill="#d04030" />
    <path d="M13 5h3v2h-3z" fill="#4080c0" />
    <path d="M1 8h32l-1 18H2z" fill="#f8e8a4" stroke="#d8b860" />
    <path d="M6 28v-9q0-2 2-2h18q2 0 2 2v9h-5v-6H11v6z" fill="#a4d8f4" stroke="#5ca8d8" />
  </svg>
);

const PhotosArt = () => (
  <svg width="32" height="30" viewBox="0 0 32 30">
    <path d="M2 9c-2 10 4 17 14 20-6-5-8-9-8-14z" fill="#f4a83c" />
    <path d="M4 4h13v14H4z" fill="#f0d8a0" stroke="#fff" strokeWidth="2" />
    <path d="M14 2h17v14H14z" fill="#8cc0e8" stroke="#fff" strokeWidth="2" />
    <path d="M11 7h16v15H11z" fill="#e89060" />
    <path d="M14 4l4 3 4-3 1 4 4 2-2 3 1 5-5 0-3 4-3-4-5 1 0-5-3-3 4-2z" fill="#dc4814" />
    <circle cx="18" cy="12" r="3" fill="#7c2808" />
    <path d="M24 16h7v7h-7z" fill="#7cb44c" stroke="#fff" />
  </svg>
);

const JointArt = () => (
  <svg width="32" height="32" viewBox="0 0 32 32" fill="#7c7c7c" stroke="#1c1c1c">
    <path d="M7 1.500q4 2 8 0v14H7z" />
    <path d="M15 17.500h15q-2 4 0 8H15z" />
    <circle cx="11" cy="21" r="9" />
    <circle cx="11" cy="21" r="1.500" fill="#222" />
  </svg>
);

const RedBallArt = () => (
  <svg width="32" height="32" viewBox="0 0 32 32">
    <circle cx="16" cy="16" r="15.500" fill="#e01c20" />
    <path d="M3 10C8-1 24-1 29 10 21 14 11 14 3 10z" fill="#f48c88" opacity="0.600" />
    <path d="M17 5C7 8 3 16 6 22c4 7 18 4 21-9-4 9-13 13-17 8-3-4 1-11 7-16z" fill="#fff" />
    <path d="M12 8l9-4-5 6z" fill="#fff" />
  </svg>
);

const ScopeArt = () => (
  <svg width="32" height="32" viewBox="0 0 32 32">
    <rect x="0.500" y="0.500" width="31" height="31" fill="#000" stroke="#b0b0b0" />
    <path d="M8.500 1v30M16.500 1v30M24.500 1v30M1 8.500h30M1 16.500h30M1 24.500h30" stroke="#909090" shapeRendering="crispEdges" />
    <path d="M1 17C5 3 11 3 16 16s10 13 15 0" fill="none" stroke="#30e0d8" strokeWidth="1.500" />
  </svg>
);

const BrowserArt = () => (
  <svg width="32" height="32" viewBox="0 0 32 32">
    <path d="M27.500 17.500H11C11.500 23 19 24 21 20h6C24 31 6 29 6 16.500S24 2.500 27.500 14z" fill="#56c0f4" stroke="#1c78b8" />
    <path d="M11 13.500h10.500C21 8.500 12 8.500 11 13.500z" fill="#6c8084" stroke="#1c78b8" />
    <path d="M6 29C-2 28 5 12 18 5 28-.5 32 3 28.500 9 28 3 22 5 16 10 8 17 3 26 9 26.500z" fill="#fbd038" stroke="#c89018" strokeWidth="0.600" />
  </svg>
);

const MailArt = () => (
  <svg width="34" height="30" viewBox="0 0 34 30">
    <path d="M12 2l20 2-3 16H10z" fill="#8cbc5c" />
    <path d="M9 4l21 2-3 16H8z" fill="#f0a850" />
    <path d="M6 9h24v16H6z" fill="#e0f0fc" stroke="#90bce0" />
    <path d="M23 11h5v5h-5z" fill="#b06820" />
    <path d="M13 17h11v5H13z" fill="#fff" stroke="#a8c8e0" strokeWidth="0.600" />
    <path d="M1 24c8 4 12-3 20 0 4 2 7 2 9 0-2 5-8 5-12 3-6-2-10 3-17-3z" fill="#f4a830" />
  </svg>
);

const ChatArt = () => (
  <svg width="32" height="32" viewBox="0 0 32 32">
    <path d="M2 9C1 3 7 0 12 2c9-2 17 5 17 13 3 6 0 14-7 14-2 1-4 1-6 0C7 30 2 23 2 16z" fill="#04aeea" />
    <text x="16" y="23" textAnchor="middle" fill="#fff" fontFamily={arial} fontWeight="700" fontSize="22">S</text>
  </svg>
);

const SpiceArt = () => (
  <svg width="36" height="30" viewBox="0 0 36 30">
    <g fill="#8b0a0f" transform="translate(1 3)">
      <path d={markL} />
      <path d={markT} />
    </g>
    <path d="M25 14l6 2v5q0 5-6 7.500-6-2.500-6-7.500v-5z" fill="#f0d040" stroke="#dfe8ee" />
    <path d="M25 15v6h-5v-4zM25 21h5q0 4-5 6.500z" fill="#2c70c8" />
  </svg>
);

const NoteArt = () => (
  <svg width="32" height="32" viewBox="0 0 32 32">
    <path d="M11 4l18 2-3 22-6 1z" fill="#dfeaec" />
    <path d="M10 4l16 2-5 22L1 24z" fill="#74b8c0" />
    <path d="M10 4l16 2-2 8-16-2z" fill="#b8e0e4" />
    <path d="M21 28l6-22 1 22z" fill="#f4f8f8" />
    <path d="M10 5l17 2" stroke="#405050" strokeDasharray="1 2" strokeWidth="2" />
  </svg>
);

/* ---------- page ---------- */

const menus = ["File", "Edit", "Hierarchy", "View", "Simulate", "Tools", "Window", "Help"];
const accel: Record<string, number> = { Hierarchy: 1 };

const tabs: { t: string; wave?: boolean; w: number }[] = [
  { t: "dado-VSSA-ccs", w: 113 },
  { t: "dado-VSSA-ccs", wave: true, w: 108 },
  { t: "GainWire-finall-IIII", w: 117 },
  { t: "GainWire-finall-IIII", wave: true, w: 117 },
  { t: "GainWire-poweramp-1a", w: 145 },
  { t: "GainWire-poweramp-1a", wave: true, w: 145 },
  { t: "GainWire-poweramp-3", wave: true, w: 139 },
  { t: "GainWire-poweramp-3", w: 139 },
  { t: "VSSA-jfet-dado", w: 106 },
  { t: "VSSA-jfet-dado", wave: true, w: 103 },
];

const minimized: [string, boolean][] = [
  ["Gai...", true], ["Gai...", false], ["Gai...", false], ["Gai...", true],
  ["Gai...", false], ["Gai...", true], ["VSS...", false], ["VSS...", true],
];

const tasks: [string, React.ReactNode, ("open" | "stack" | "front")?][] = [
  ["Explorer", <FolderArt />, "open"],
  ["Photos", <PhotosArt />],
  ["Joint", <JointArt />],
  ["Security", <RedBallArt />],
  ["Scope", <ScopeArt />],
  ["Browser", <BrowserArt />, "stack"],
  ["Mail", <MailArt />, "open"],
  ["Chat", <ChatArt />, "open"],
  ["LTspice IV", <SpiceArt />, "front"],
  ["Notes", <NoteArt />, "stack"],
];

const ArrowGlyph = ({ d }: { d: string }) => (
  <svg width="7" height="7" fill="#303030"><path d={d} /></svg>
);

export default function App() {
  return (
    <>
      <GlobalStyle />
      <Desktop>
        <AppWindow>
          <TitleBar>
            <AppTitle><LogoMark />LTspice IV - dado-VSSA-ccs</AppTitle>
            <CaptionGroup>
              <AppCaption aria-label="Minimize"><CapIcon kind="min" dark /></AppCaption>
              <AppCaption aria-label="Maximize"><CapIcon kind="max" dark /></AppCaption>
              <AppCaption aria-label="Close" $close><CapIcon kind="close" dark /></AppCaption>
            </CaptionGroup>
          </TitleBar>
          <Client>
            <MenuBar>
              {menus.map((m) => {
                const k = accel[m] ?? 0;
                return (
                  <MenuItem key={m}>
                    {m.slice(0, k)}<u>{m[k]}</u>{m.slice(k + 1)}
                  </MenuItem>
                );
              })}
            </MenuBar>
            <ToolBar role="toolbar">
              <Grip />
              {tools.map((t, i) =>
                t === "|" ? (
                  <Divider key={i} />
                ) : (
                  <Tool key={i} aria-label={t.id} $off={t.off}>
                    <svg width="17" height="16" overflow="visible">{t.art}</svg>
                  </Tool>
                ),
              )}
              <ToolEnd />
            </ToolBar>
            <TabStrip role="tablist">
              {tabs.map((t, i) => (
                <Tab key={i} role="tab" aria-selected={i === 0} $w={t.w} $active={i === 0}>
                  {t.wave ? <WaveIcon /> : <TransistorIcon />}
                  {t.t}
                </Tab>
              ))}
            </TabStrip>
            <TabRule />
            <Mdi>
              <Tiles>
                <Child>
                  <ChildBar>
                    <ChildTitle><WaveIcon />dado-VSSA-ccs</ChildTitle>
                    <Caption aria-label="Minimize"><CapIcon kind="min" /></Caption>
                    <Caption aria-label="Maximize"><CapIcon kind="max" /></Caption>
                    <Caption aria-label="Close"><CapIcon kind="close" /></Caption>
                  </ChildBar>
                  <ChildBody $plot><BodePlot /></ChildBody>
                </Child>
                <Child $active>
                  <ChildBar $active>
                    <ChildTitle><TransistorIcon />dado-VSSA-ccs</ChildTitle>
                    <Caption aria-label="Minimize" $tone="active"><CapIcon kind="min" /></Caption>
                    <Caption aria-label="Maximize" $tone="active"><CapIcon kind="max" /></Caption>
                    <Caption aria-label="Close" $tone="close"><CapIcon kind="close" /></Caption>
                  </ChildBar>
                  <ChildBody>
                    <Schematic />
                    <VScroll>
                      <Arrow aria-label="Scroll up"><ArrowGlyph d="M0 5h7L3.500 1z" /></Arrow>
                      <VThumb><svg width="7" height="7" stroke="#707070" shapeRendering="crispEdges"><path d="M0 .500h7M0 3.500h7M0 6.500h7" /></svg></VThumb>
                      <Fill />
                      <Arrow aria-label="Scroll down"><ArrowGlyph d="M0 2h7L3.500 6z" /></Arrow>
                    </VScroll>
                    <HScroll>
                      <Arrow aria-label="Scroll left"><ArrowGlyph d="M5 0v7L1 3.500z" /></Arrow>
                      <HThumb><svg width="7" height="7" stroke="#707070" shapeRendering="crispEdges"><path d="M.500 0v7M3.500 0v7M6.500 0v7" /></svg></HThumb>
                      <Fill />
                      <Arrow aria-label="Scroll right"><ArrowGlyph d="M2 0v7L6 3.500z" /></Arrow>
                    </HScroll>
                    <GripCell><GripDots /></GripCell>
                  </ChildBody>
                </Child>
              </Tiles>
              <MinRow>
                {minimized.map(([t, wave], i) => (
                  <MinChild key={i}>
                    {wave ? <WaveIcon /> : <TransistorIcon />}
                    <span>{t}</span>
                    <Caption aria-label="Restore"><CapIcon kind="restore" /></Caption>
                    <Caption aria-label="Maximize"><CapIcon kind="max" /></Caption>
                    <Caption aria-label="Close"><CapIcon kind="close" /></Caption>
                  </MinChild>
                ))}
              </MinRow>
            </Mdi>
            <StatusBar><StatusGrip><GripDots /></StatusGrip></StatusBar>
          </Client>
        </AppWindow>
        <TaskBar>
          <StartButton aria-label="Start"><StartOrb /></StartButton>
          {tasks.map(([name, art, state]) => (
            <Task key={name} aria-label={name} $state={state}>{art}</Task>
          ))}
          <Tray>
            <Lang>HR</Lang>
            <TrayIcon aria-label="Show hidden icons" $w={17}>
              <svg width="8" height="16"><path d="M0 10h8L4 5z" fill="#fff" /></svg>
            </TrayIcon>
            <TrayIcon aria-label="Updates" $w={25}>
              <svg width="16" height="16">
                <rect width="16" height="16" fill="#c8cccc" />
                <path d="M4.500 5.500C2 10 5 13 8 13s6-3 3.500-7L8.500 4" fill="none" stroke="#fff" strokeWidth="2.500" />
                <path d="M7 1v6l5-2z" fill="#fff" />
              </svg>
            </TrayIcon>
            <TrayIcon aria-label="Network" $w={23}>
              <svg width="16" height="16" fill="none" stroke="#fff">
                <path d="M5.500 4.500h10v7h-10z" strokeWidth="1.500" fill="#3a4c50" />
                <path d="M10.500 12v2M6 14.500h9M2.500 8v6.500h4M.500 4.500h4v3h-4zM1.500 2v2M3.500 2v2" />
              </svg>
            </TrayIcon>
            <TrayIcon aria-label="Volume" $w={21}>
              <svg width="16" height="16">
                <path d="M1 5h2l4-4v14l-4-4H1z" fill="#fff" />
                <path d="M9 6q2 2 0 4M11 4q3.500 4 0 8M13 3q4 5 0 10" stroke="#fff" fill="none" />
              </svg>
            </TrayIcon>
            <Clock>16:28<br />31.3.2013.</Clock>
            <ShowDesktop aria-label="Show desktop" />
          </Tray>
        </TaskBar>
      </Desktop>
    </>
  );
}
